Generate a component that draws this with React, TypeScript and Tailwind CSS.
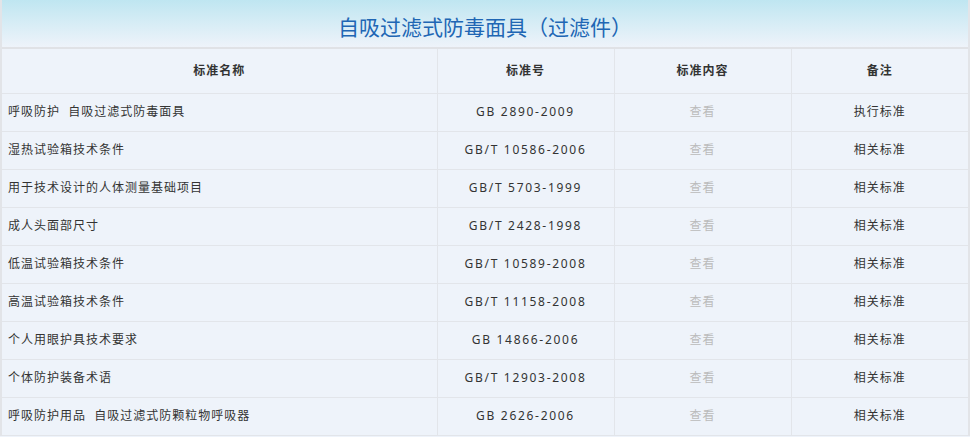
const rows: [string, string, string][] = [
  ["呼吸防护 自吸过滤式防毒面具", "GB 2890-2009", "执行标准"],
  ["湿热试验箱技术条件", "GB/T 10586-2006", "相关标准"],
  ["用于技术设计的人体测量基础项目", "GB/T 5703-1999", "相关标准"],
  ["成人头面部尺寸", "GB/T 2428-1998", "相关标准"],
  ["低温试验箱技术条件", "GB/T 10589-2008", "相关标准"],
  ["高温试验箱技术条件", "GB/T 11158-2008", "相关标准"],
  ["个人用眼护具技术要求", "GB 14866-2006", "相关标准"],
  ["个体防护装备术语", "GB/T 12903-2008", "相关标准"],
  ["呼吸防护用品 自吸过滤式防颗粒物呼吸器", "GB 2626-2006", "相关标准"],
];

const font = { fontFamily: '"Noto Sans", "Noto Sans CJK SC", sans-serif' };

export default function App() {
  return (
    <div className="w-[970px] h-[437px] overflow-hidden bg-[#eef3fa]" style={font}>
      <div className="border-x-2 border-[#e2e4e8]">
        <div className="h-[49px] flex items-center justify-center bg-gradient-to-b from-[#bfe6f1] to-[#eef3fa] border-b-2 border-[#e0e2e6]">
          <h1 className="text-[21px] text-[#2066b4] leading-none pt-[8px]">自吸过滤式防毒面具（过滤件）</h1>
        </div>
        <table className="w-full border-collapse table-fixed text-[12px] tracking-[1px] text-[#333]">
          <colgroup>
            <col className="w-[435px]" />
            <col className="w-[177px]" />
            <col className="w-[177px]" />
            <col />
          </colgroup>
          <thead>
            <tr className="h-[44px]">
              <th className="font-bold border-b border-[#e2e5ea]">标准名称</th>
              <th className="font-bold border-b border-l border-[#e2e5ea]">标准号</th>
              <th className="font-bold border-b border-l border-[#e2e5ea]">标准内容</th>
              <th className="font-bold border-b border-l border-[#e2e5ea]">备注</th>
            </tr>
          </thead>
          <tbody>
            {rows.map(([name, code, note]) => (
              <tr key={code} className="h-[38px]">
                <td className="pl-[6px] border-b border-[#e2e5ea] whitespace-pre">{name.replace(" ", "  ")}</td>
                <td className="text-center tracking-[1.7px] border-b border-l border-[#e2e5ea]">{code}</td>
                <td className="text-center text-[#bbbbbb] border-b border-l border-[#e2e5ea]">查看</td>
                <td className="text-center border-b border-l border-[#e2e5ea]">{note}</td>
              </tr>
            ))}
          </tbody>
        </table>
      </div>
    </div>
  );
}
